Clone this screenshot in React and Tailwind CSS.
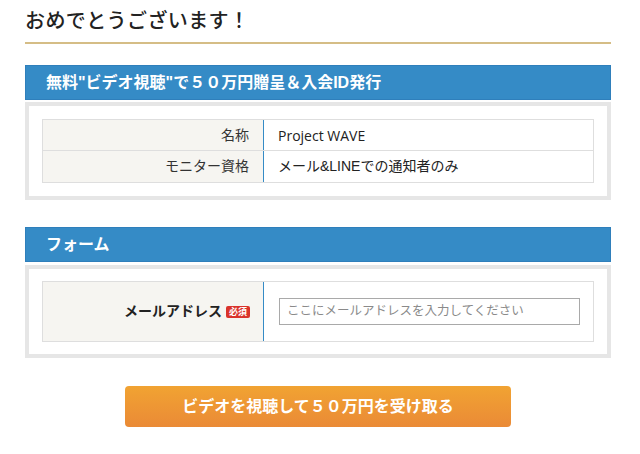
export default function App() {
  const font = { fontFamily: '"Liberation Sans", "Noto Sans CJK JP", sans-serif' };
  return (
    <div className="w-[640px] h-[454px] bg-white text-[#222]" style={font}>
      <div className="pl-[25px] pr-[29px] pt-[6px]">
        <h1 className="text-[20px] tracking-[0.4px] leading-[30px] font-medium text-[#222] pb-[6px] border-b-2 border-[#d5bd86]">
          おめでとうございます！
        </h1>

        <div className="mt-[21px] h-[35px] bg-[#358bc6] border border-[#2f7fbb] flex items-center pl-[20px] text-white font-bold text-[16px]">
          無料"ビデオ視聴"で５０万円贈呈＆入会ID発行
        </div>
        <div className="mt-[2px] border-[4px] border-[#e6e6e6] px-[13px] pt-[13px] pb-[13px]">
          <div className="border border-[#dedede] text-[14px]">
            <div className="flex h-[31px] border-b border-[#dedede]">
              <div className="w-[220px] bg-[#f6f5f1] flex items-center justify-end pr-[14px] text-[#333]">名称</div>
              <div className="flex-1 border-l border-l-[#358bc6] flex items-center pl-[14px] text-[#222]">
                <span style={{ fontFamily: '"Open Sans", "Noto Sans CJK JP", sans-serif' }}>Project WAVE</span>
              </div>
            </div>
            <div className="flex h-[31px]">
              <div className="w-[220px] bg-[#f6f5f1] flex items-center justify-end pr-[14px] text-[#333]">モニター資格</div>
              <div className="flex-1 border-l border-l-[#358bc6] flex items-center pl-[14px] text-[#222]">メール&amp;LINEでの通知者のみ</div>
            </div>
          </div>
        </div>

        <div className="mt-[27px] h-[35px] bg-[#358bc6] border border-[#2f7fbb] flex items-center pl-[20px] text-white font-bold text-[16px]">
          フォーム
        </div>
        <div className="mt-[3px] border-[4px] border-[#e6e6e6] px-[13px] pt-[12px] pb-[12px]">
          <div className="border border-[#dedede] text-[14px] flex h-[61px]">
            <div className="w-[220px] bg-[#f6f5f1] flex items-center justify-end pr-[13px]">
              <span className="font-bold text-[#222]">メールアドレス</span>
              <span className="ml-[4px] bg-[#d9332b] text-white text-[9px] font-bold leading-[12px] px-[3px] rounded-[2px]">必須</span>
            </div>
            <div className="flex-1 border-l border-l-[#358bc6] flex items-center pl-[15px]">
              <div className="w-[301px] h-[27px] border border-[#a9a9a9] flex items-center pl-[7px] text-[12.5px] text-[#8a8a8a]">
                ここにメールアドレスを入力してください
              </div>
            </div>
          </div>
        </div>

        <div className="mt-[28px] flex justify-center">
          <div className="w-[386px] h-[41px] rounded-[4px] bg-gradient-to-b from-[#f1a332] to-[#ea8a36] flex items-center justify-center text-white font-bold text-[16px]">
            ビデオを視聴して５０万円を受け取る
          </div>
        </div>
      </div>
    </div>
  );
}
